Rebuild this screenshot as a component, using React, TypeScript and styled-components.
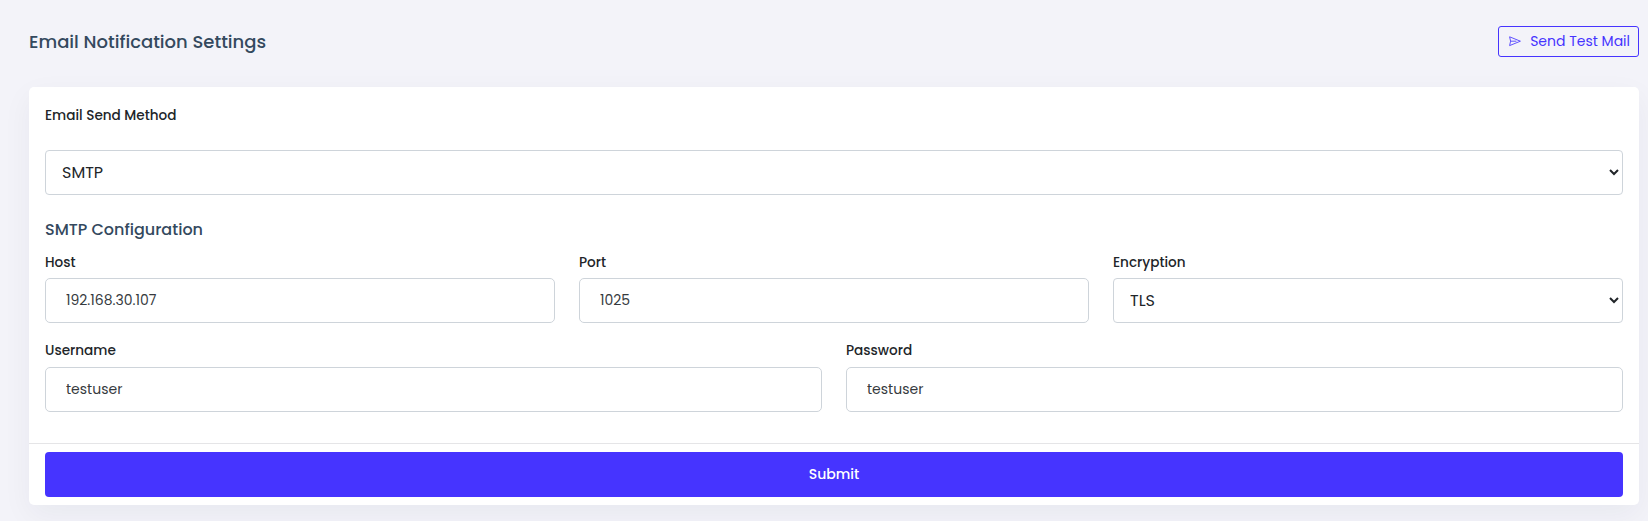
import React from 'react';
import styled, { createGlobalStyle } from 'styled-components';

const GlobalStyle = createGlobalStyle`
  *, *::before, *::after { box-sizing: border-box; }
  body {
    margin: 0;
    background: #f3f3f9;
    color: #212529;
    font-family: Poppins, Inter, "Open Sans", sans-serif;
    font-size: 14px;
    overflow: hidden;
  }
`;

const Page = styled.main`
  min-height: 521px;
  padding: 26px 9px 16px 29px;
`;

const Header = styled.header`
  display: flex;
  align-items: flex-start;
  justify-content: space-between;
  height: 61px;
`;

const Title = styled.h1`
  margin: 0;
  color: #34495e;
  font-size: 18px;
  font-weight: 500;
  line-height: 32px;
`;

const TestButton = styled.button`
  display: flex;
  align-items: center;
  justify-content: space-between;
  width: 141px;
  height: 31px;
  padding: 0 8px 1px 10px;
  border: 1px solid #4634ff;
  border-radius: 3px;
  background: transparent;
  color: #4634ff;
  font: inherit;
  line-height: 20px;
  white-space: nowrap;
`;

const Card = styled.form`
  border-radius: 5px;
  background: #fff;
  box-shadow: 0 10px 30px rgba(18, 38, 63, 0.05);
`;

const CardBody = styled.div`
  height: 356px;
  padding: 17px 16px 16px;
`;

const CardFooter = styled.footer`
  padding: 8px 16px;
  border-top: 1px solid #e5e5e7;
`;

const Label = styled.label`
  display: block;
  font-size: 13.6px;
  font-weight: 500;
  line-height: 24px;
`;

const Method = styled.div`
  display: flex;
  flex-direction: column;
  gap: 22px;
`;

const SectionTitle = styled.h2`
  margin: 25px 0 11px;
  color: #34495e;
  font-size: 16px;
  font-weight: 500;
  line-height: 20px;
`;

const Field = styled.div`
  display: flex;
  flex-direction: column;
`;

const Row = styled.div<{ $columns: number; $labelGap: number }>`
  display: grid;
  grid-template-columns: repeat(${(p) => p.$columns}, 1fr);
  column-gap: 24px;
  & + & { margin-top: 16px; }
  ${Field} { gap: ${(p) => p.$labelGap}px; }
`;

const Input = styled.input`
  width: 100%;
  height: 45px;
  padding: 0 20px;
  border: 1px solid #ced4da;
  border-radius: 5px;
  outline: none;
  background: #fff;
  color: #363a3e;
  font: inherit;
`;

const Select = styled.select`
  width: 100%;
  height: 45px;
  padding: 0 12px;
  border: 1px solid #ced4da;
  border-radius: 4px;
  outline: none;
  background: #fff;
  color: #212529;
  font: inherit;
  font-size: 16px;
`;

const SubmitButton = styled.button`
  display: block;
  width: 100%;
  height: 45px;
  padding: 0 0 1px;
  border: 0;
  border-radius: 4px;
  background: #4634ff;
  color: #fff;
  font: inherit;
  font-weight: 500;
`;

const SendIcon = () => (
  <svg width="12" height="14" viewBox="0 0 12 14" fill="none" stroke="currentColor" strokeWidth="0.85" strokeLinejoin="round">
    <path d="M0.6 2.8 L11.4 7.2 L0.6 11.6 L1.6 7.2 Z" />
    <path d="M1.6 7.2 H7.4" />
  </svg>
);

export default function App() {
  return (
    <>
      <GlobalStyle />
      <Page>
        <Header>
          <Title>Email Notification Settings</Title>
          <TestButton type="button">
            <SendIcon />
            Send Test Mail
          </TestButton>
        </Header>
        <Card>
          <CardBody>
            <Method>
              <Label htmlFor="method">Email Send Method</Label>
              <Select id="method">
                <option>SMTP</option>
              </Select>
            </Method>
            <SectionTitle>SMTP Configuration</SectionTitle>
            <Row $columns={3} $labelGap={3}>
              <Field>
                <Label htmlFor="host">Host</Label>
                <Input id="host" defaultValue="192.168.30.107" />
              </Field>
              <Field>
                <Label htmlFor="port">Port</Label>
                <Input id="port" defaultValue="1025" />
              </Field>
              <Field>
                <Label htmlFor="encryption">Encryption</Label>
                <Select id="encryption">
                  <option>TLS</option>
                </Select>
              </Field>
            </Row>
            <Row $columns={2} $labelGap={4}>
              <Field>
                <Label htmlFor="username">Username</Label>
                <Input id="username" defaultValue="testuser" />
              </Field>
              <Field>
                <Label htmlFor="password">Password</Label>
                <Input id="password" defaultValue="testuser" />
              </Field>
            </Row>
          </CardBody>
          <CardFooter>
            <SubmitButton type="button">Submit</SubmitButton>
          </CardFooter>
        </Card>
      </Page>
    </>
  );
}
